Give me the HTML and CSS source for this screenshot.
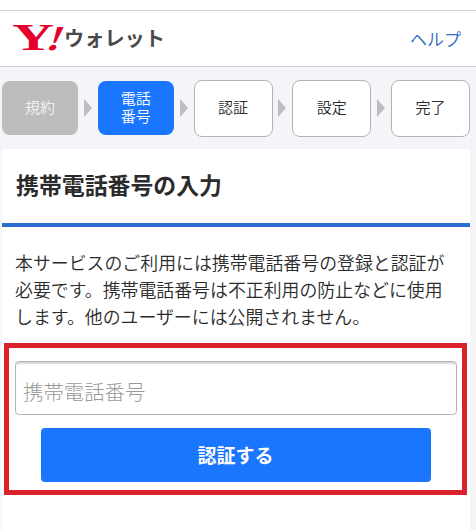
FILE: index.html
```html
<!DOCTYPE html>
<html lang="ja">
<head>
    <meta charset="UTF-8">
    <meta name="viewport" content="width=device-width, initial-scale=1.0">
    <title>Y!ウォレット</title>
    <link rel="stylesheet" href="styles.css">
</head>
<body>
    <header class="header">
        <div class="logo">
            <svg class="logo-mark" width="52" height="30" viewBox="0 0 52 30">
                <text class="logo-y" x="0" y="29" textLength="42" lengthAdjust="spacingAndGlyphs">Y</text>
                <text class="logo-bang" transform="translate(32.5 29) scale(1.25 1) skewX(-17)">!</text>
            </svg>
            <span class="logo-name">ウォレット</span>
        </div>
        <a class="help" href="#">ヘルプ</a>
    </header>

    <ol class="steps">
        <li class="step done">規約</li>
        <li class="arrow"></li>
        <li class="step current">電話<br>番号</li>
        <li class="arrow"></li>
        <li class="step">認証</li>
        <li class="arrow"></li>
        <li class="step">設定</li>
        <li class="arrow"></li>
        <li class="step">完了</li>
    </ol>

    <main class="panel">
        <h1 class="title">携帯電話番号の入力</h1>
        <p class="text">本サービスのご利用には携帯電話番号の登録と認証が<br>必要です。携帯電話番号は不正利用の防止などに使用<br>します。他のユーザーには公開されません。</p>
        <form class="form">
            <input type="tel" class="phone" placeholder="携帯電話番号">
            <button type="button" class="submit">認証する</button>
        </form>
    </main>
</body>
</html>
```
FILE: styles.css
```css
* {
    box-sizing: border-box;
}
body {
    margin: 0;
    padding-top: 10px;
    height: 530px;
    overflow: hidden;
    display: flex;
    flex-direction: column;
    background: #fff;
    color: #2b2b2b;
    font-family: "Liberation Sans", "Noto Sans CJK JP", sans-serif;
    font-weight: 350;
}
.header {
    flex: none;
    display: flex;
    justify-content: space-between;
    align-items: center;
    height: 57px;
    padding: 0 15px 0 12px;
    border-top: 1px solid #d2d2d4;
    border-bottom: 1px solid #d2d2d6;
}
.logo {
    display: flex;
    align-items: center;
}
.logo-mark {
    display: block;
    overflow: visible;
    margin-top: -6px;
}
.logo-y {
    font: bold 38px "Liberation Serif", serif;
    fill: #e5002d;
}
.logo-bang {
    font: bold 35px "Liberation Serif", serif;
    fill: #e5002d;
}
.logo-name {
    color: #4a4a4a;
    font-size: 20.2px;
    font-weight: bold;
    line-height: 30px;
}
.help {
    color: #2f68c4;
    font-size: 17px;
    text-decoration: none;
}
.steps {
    flex: none;
    display: flex;
    align-items: center;
    justify-content: space-between;
    height: 82px;
    margin: 0;
    padding: 0 6px 0 2px;
    list-style: none;
    background: #f4f5f8;
}
.step {
    display: flex;
    align-items: center;
    justify-content: center;
    width: 79px;
    height: 57px;
    border: 1.5px solid #b3b3b5;
    border-radius: 8px;
    background: #fff;
    font-size: 15px;
    line-height: 18px;
}
.step.done,
.step.current {
    width: 76px;
    height: 54px;
    border: none;
    color: #fff;
}
.step.done {
    background: #bdbdbd;
    color: #f2f2f2;
}
.step.current {
    background: #1a75ff;
}
.arrow {
    border-left: 8px solid #bdbdbf;
    border-top: 9px solid transparent;
    border-bottom: 9px solid transparent;
}
.panel {
    flex: 1;
    background: #fff;
    border-left: 2px solid #f6f7f9;
    border-right: 6px solid #f5f5f7;
}
.title {
    display: flex;
    align-items: center;
    height: 78px;
    margin: 0;
    padding: 0 14px 4px;
    border-bottom: 4px solid #2b6dd0;
    font-size: 22.9px;
    font-weight: bold;
}
.text {
    margin: 24px 0 0;
    padding-left: 13px;
    font-size: 17.9px;
    line-height: 27px;
    white-space: nowrap;
}
.form {
    width: 463px;
    height: 152px;
    margin: 11px 0 0 2px;
    padding: 13px 5px 0 6px;
    border: 5px solid #db222b;
}
.phone {
    display: block;
    width: 442px;
    height: 54px;
    padding: 10px 7px 0;
    border: 1.5px solid #b4b4b4;
    border-radius: 4px;
    box-shadow: inset 0 2px 1px #dcdcdc;
    font-family: inherit;
    font-size: 20.4px;
    font-weight: 300;
}
.phone::placeholder {
    color: #999;
}
.submit {
    display: block;
    width: 390px;
    height: 54px;
    margin: 13px 0 0 26px;
    padding: 0 1px 2px 0;
    border: none;
    border-radius: 4px;
    background: #1a75ff;
    color: #fff;
    font-family: inherit;
    font-size: 19px;
    font-weight: bold;
}
```
